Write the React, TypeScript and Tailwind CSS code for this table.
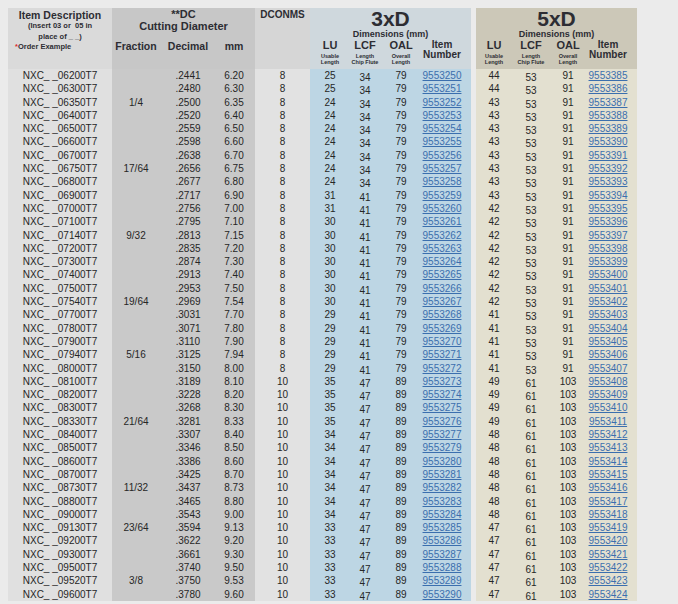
const codes = ["06200","06300","06350","06400","06500","06600","06700","06750","06800","06900","07000","07100","07140","07200","07300","07400","07500","07540","07700","07800","07900","07940","08000","08100","08200","08300","08330","08400","08500","08600","08700","08730","08800","09000","09130","09200","09300","09500","09520","09600"];

const fractions: Record<number, string> = { 2: "1/4", 7: "17/64", 12: "9/32", 17: "19/64", 21: "5/16", 26: "21/64", 31: "11/32", 34: "23/64", 38: "3/8" };

const decimals = [".2441",".2480",".2500",".2520",".2559",".2598",".2638",".2656",".2677",".2717",".2756",".2795",".2813",".2835",".2874",".2913",".2953",".2969",".3031",".3071",".3110",".3125",".3150",".3189",".3228",".3268",".3281",".3307",".3346",".3386",".3425",".3437",".3465",".3543",".3594",".3622",".3661",".3740",".3750",".3780"];

const mms = ["6.20","6.30","6.35","6.40","6.50","6.60","6.70","6.75","6.80","6.90","7.00","7.10","7.15","7.20","7.30","7.40","7.50","7.54","7.70","7.80","7.90","7.94","8.00","8.10","8.20","8.30","8.33","8.40","8.50","8.60","8.70","8.73","8.80","9.00","9.13","9.20","9.30","9.50","9.53","9.60"];

const lu3 = [25,25,24,24,24,24,24,24,24,31,31,30,30,30,30,30,30,30,29,29,29,29,29,35,35,35,35,34,34,34,34,34,34,34,33,33,33,33,33,33];
const lu5 = [44,44,43,43,43,43,43,43,43,43,42,42,42,42,42,42,42,42,41,41,41,41,41,49,49,49,49,48,48,48,48,48,48,48,47,47,47,47,47,47];

type Row = {
  code: string;
  frac: string;
  dec: string;
  mm: string;
  dcon: number;
  x3: [number, number, number, number];
  x5: [number, number, number, number];
};

const rows: Row[] = codes.map((code, i) => {
  const small = i <= 22;
  return {
    code,
    frac: fractions[i] ?? "",
    dec: decimals[i],
    mm: mms[i],
    dcon: small ? 8 : 10,
    x3: [lu3[i], i <= 8 ? 34 : small ? 41 : 47, small ? 79 : 89, i <= 27 ? 9553250 + i : 9553251 + i],
    x5: [lu5[i], small ? 53 : 61, small ? 91 : 103, 9553385 + i],
  };
});

const rowCls = "h-[13.3px] leading-[13.3px] text-[10px]";

const SubHead = ({ title, a, b }: { title: string; a: string; b: string }) => (
  <div className="flex flex-col items-center">
    <div className="text-[11px] leading-[11px]">{title}</div>
    <div className="mt-[3px] whitespace-nowrap text-[5.5px] leading-[5.5px]">{a}</div>
    <div className="whitespace-nowrap text-[5.5px] leading-[5.5px]">{b}</div>
  </div>
);

const DimGroup = ({ label, cols, head, body, pick }: { label: string; cols: string; head: string; body: string; pick: (r: Row) => [number, number, number, number] }) => (
  <div className="w-[161px] flex flex-col">
    <div className={`h-[61px] pt-[1px] text-center font-bold ${head}`}>
      <div className="text-[21px] leading-[20px]">{label}</div>
      <div className="text-[9px] leading-[10px]">Dimensions (mm)</div>
      <div className={`mt-[1px] grid ${cols}`}>
        <SubHead title="LU" a="Usable" b="Length" />
        <SubHead title="LCF" a="Length" b="Chip Flute" />
        <SubHead title="OAL" a="Overall" b="Length" />
        <div className="flex flex-col text-[10px] leading-[9.5px]">
          <span>Item</span>
          <span>Number</span>
        </div>
      </div>
    </div>
    <div className={body}>
      {rows.map((r) => {
        const [lu, lcf, oal, item] = pick(r);
        return (
          <div key={r.code} className={`grid text-center ${cols} ${rowCls}`}>
            <div>{lu}</div>
            <div className="translate-y-[1.5px]">{lcf}</div>
            <div>{oal}</div>
            <div className="text-[#3b6fae] underline decoration-[0.8px] underline-offset-[1px]">{item}</div>
          </div>
        );
      })}
    </div>
  </div>
);

export default function App() {
  return (
    <div className="w-[678px] h-[604px] overflow-hidden bg-[#ebebeb] pt-2 pl-2 font-['Liberation_Sans',Arial,sans-serif] text-[#262626]">
      <div className="flex">
        {/* item description */}
        <div className="w-[104px] flex flex-col">
          <div className="h-[61px] bg-[#dadada] pt-[1px] font-bold text-[#2d2d33]">
            <div className="text-center text-[10.5px] leading-[12px]">Item Description</div>
            <div className="text-center text-[7.5px] leading-[10.5px] whitespace-pre">(Insert 03 or  05 in</div>
            <div className="text-center text-[7.5px] leading-[10.5px] whitespace-pre">place of _ _)</div>
            <div className="pl-[7px] text-[7.5px] leading-[10.5px]">
              <span className="text-[#e02a2a]">*</span>Order Example
            </div>
          </div>
          <div className="bg-[#e0e0e0]">
            {rows.map((r) => (
              <div key={r.code} className={`text-center whitespace-pre ${rowCls}`}>
                NXC_ _{r.code}T7
              </div>
            ))}
          </div>
        </div>

        {/* cutting diameter */}
        <div className="w-[143px] flex flex-col bg-[#c9c9c9]">
          <div className="h-[61px] bg-[#c7c7c7] pt-[1px] text-center font-bold text-[#2d2d33]">
            <div className="text-[11px] leading-[11.5px]">**DC</div>
            <div className="text-[11px] leading-[11.5px]">Cutting Diameter</div>
            <div className="mt-[8px] grid grid-cols-[48px_56px_39px] text-[10.5px] leading-[12px]">
              <div>Fraction</div>
              <div className="-translate-y-[0.5px]">Decimal</div>
              <div className="pr-[3px] -translate-y-[0.5px]">mm</div>
            </div>
          </div>
          <div>
            {rows.map((r) => (
              <div key={r.code} className={`grid grid-cols-[48px_56px_39px] text-center ${rowCls}`}>
                <div>{r.frac}</div>
                <div>{r.dec}</div>
                <div className="pr-[3px]">{r.mm}</div>
              </div>
            ))}
          </div>
        </div>

        {/* DCONMS */}
        <div className="w-[55px] flex flex-col">
          <div className="h-[61px] bg-[#d6d6d6] pt-[1px] text-center font-bold text-[10px] leading-[12px] text-[#2d2d33]">DCONMS</div>
          <div className="bg-[#e2e2e2]">
            {rows.map((r) => (
              <div key={r.code} className={`text-center ${rowCls}`}>
                {r.dcon}
              </div>
            ))}
          </div>
        </div>

        <DimGroup label="3xD" cols="grid-cols-[40px_30px_42px_40px]" head="bg-[#cfd8dd] text-[#2d2d33]" body="bg-[#bdd6e4]" pick={(r) => r.x3} />

        <div className="w-[5px]" />

        <DimGroup label="5xD" cols="grid-cols-[36px_38px_36px_44px]" head="bg-[#ccc8b8] text-[#2d2d33]" body="bg-[#e3e0d0]" pick={(r) => r.x5} />
      </div>
    </div>
  );
}
